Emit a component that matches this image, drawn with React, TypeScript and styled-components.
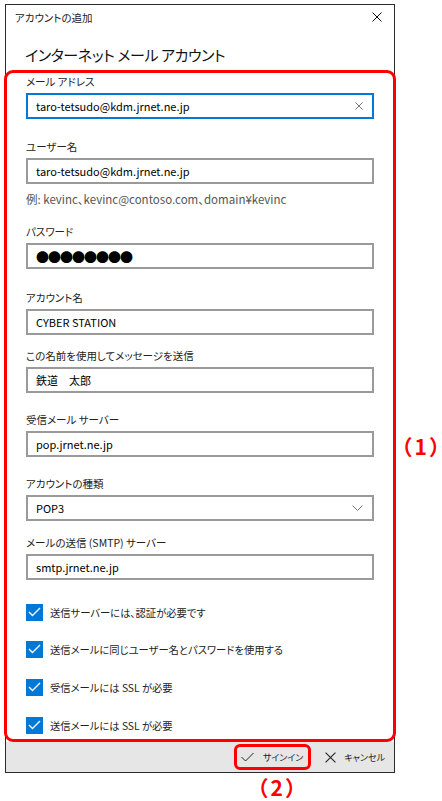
import React from 'react';
import styled, { createGlobalStyle } from 'styled-components';

const Colors = {
  RED: '#ff0000',
  BLUE: '#0078d7',
  BORDER: '#9a9a9a',
  FOOTER: '#e6e6e6',
  TEXT: '#1a1a1a',
  HINT: '#555555',
};

const GlobalStyle = createGlobalStyle`
  html, body {
    margin: 0;
    padding: 0;
    background: #ffffff;
  }
  body {
    font-family: "Noto Sans CJK JP", "Noto Sans", sans-serif;
    font-feature-settings: "palt";
    color: ${Colors.TEXT};
  }
`;

type FieldProps = {
  label: string;
  value: React.ReactNode;
  top: number;
  focused?: boolean;
  clear?: boolean;
  dropdown?: boolean;
};

const CloseGlyph: React.FC<{ size: number; color: string }> = ({ size, color }) => (
  <svg width={size} height={size} viewBox="0 0 10 10">
    <path d="M0.5 0.5 L9.5 9.5 M9.5 0.5 L0.5 9.5" stroke={color} strokeWidth="1" fill="none" />
  </svg>
);

const Field: React.FC<FieldProps> = ({ label, value, top, focused, clear, dropdown }) => (
  <FieldWrap $top={top}>
    <Label>{label}</Label>
    <TextBox $focused={focused}>
      <Value>{value}</Value>
      {clear && <CloseGlyph size={8} color="#555" />}
      {dropdown && (
        <svg width="11" height="6" viewBox="0 0 11 6">
          <path d="M0.5 0.5 L5.5 5.5 L10.5 0.5" stroke="#777" strokeWidth="1" fill="none" />
        </svg>
      )}
    </TextBox>
  </FieldWrap>
);

const Check: React.FC<{ label: string; top: number }> = ({ label, top }) => (
  <CheckRow $top={top}>
    <CheckBox>
      <svg width="13" height="10" viewBox="0 0 13 10">
        <path d="M1 5 L4.5 8.5 L12 1" stroke="#fff" strokeWidth="1.4" fill="none" />
      </svg>
    </CheckBox>
    <CheckText>{label}</CheckText>
  </CheckRow>
);

export default function App() {
  return (
    <>
      <GlobalStyle />
      <Page>
        <MainColumn>
          <Window>
            <TitleBar>
              <TitleText>アカウントの追加</TitleText>
              <CloseGlyph size={10} color="#111" />
            </TitleBar>
            <Heading>インターネット メール アカウント</Heading>
            <FormArea>
              <Field label="メール アドレス" value="taro-tetsudo@kdm.jrnet.ne.jp" top={0} focused clear />
              <Field label="ユーザー名" value="taro-tetsudo@kdm.jrnet.ne.jp" top={20} />
              <Hint>例: kevinc、kevinc@contoso.com、domain¥kevinc</Hint>
              <Field label="パスワード" value={<Dots>●●●●●●●●</Dots>} top={17} />
              <Field label="アカウント名" value="CYBER STATION" top={21} />
              <Field label="この名前を使用してメッセージを送信" value="鉄道　太郎" top={13} />
              <Field label="受信メール サーバー" value="pop.jrnet.ne.jp" top={19} />
              <Field label="アカウントの種類" value="POP3" top={19} dropdown />
              <Field label="メールの送信 (SMTP) サーバー" value="smtp.jrnet.ne.jp" top={14} />
              <Check label="送信サーバーには、認証が必要です" top={22} />
              <Check label="送信メールに同じユーザー名とパスワードを使用する" top={17} />
              <Check label="受信メールには SSL が必要" top={18} />
              <Check label="送信メールには SSL が必要" top={18} />
            </FormArea>
            <Footer>
              <SignInButton>
                <svg width="13" height="10" viewBox="0 0 13 10">
                  <path d="M0.5 5 L4.5 9 L12.5 1" stroke="#222" strokeWidth="1" fill="none" />
                </svg>
                <FooterText>サインイン</FooterText>
              </SignInButton>
              <CancelButton>
                <CloseGlyph size={11} color="#222" />
                <FooterText>キャンセル</FooterText>
              </CancelButton>
            </Footer>
          </Window>
          <Note $indent={252} $top={3}>（2）</Note>
        </MainColumn>
        <Side>
          <Note $indent={0} $top={0}>（1）</Note>
        </Side>
      </Page>
    </>
  );
}

/*
 * Styles
 */

const Page = styled.div`
  display: flex;
  flex-direction: row;
  padding: 4px 0 0 5px;
`;

const MainColumn = styled.div`
  display: flex;
  flex-direction: column;
`;

const Side = styled.div`
  padding-top: 431px;
  padding-left: 6px;
`;

const Window = styled.div`
  width: 390px;
  box-sizing: border-box;
  border: 1px solid #2b2b2b;
  display: flex;
  flex-direction: column;
`;

const TitleBar = styled.div`
  height: 24px;
  display: flex;
  align-items: center;
  justify-content: space-between;
  padding: 0 12px 0 9px;
`;

const TitleText = styled.span`
  font-size: 10.5px;
  color: #222;
`;

const Heading = styled.h1`
  margin: 14px 0 0 19px;
  font-size: 15px;
  letter-spacing: -0.4px;
  font-weight: 400;
  line-height: 24px;
  color: #111;
`;

const FormArea = styled.div`
  margin: 3px -2px 0 -2px;
  border: 3px solid ${Colors.RED};
  border-radius: 9px;
  padding: 1px 19px 4px;
  display: flex;
  flex-direction: column;
`;

const FieldWrap = styled.div<{ $top: number }>`
  margin-top: ${(p) => p.$top}px;
  display: flex;
  flex-direction: column;
  gap: 3px;
`;

const Label = styled.label`
  font-size: 10.5px;
  line-height: 16px;
  color: #222;
`;

const TextBox = styled.div<{ $focused?: boolean }>`
  height: 26px;
  box-sizing: border-box;
  border: 2px solid ${(p) => (p.$focused ? Colors.BLUE : Colors.BORDER)};
  display: flex;
  align-items: center;
  justify-content: space-between;
  padding: 0 9px 0 8px;
  background: #fff;
`;

const Value = styled.span`
  font-size: 11px;
  color: #000;
  white-space: pre;
`;

const Dots = styled.span`
  font-size: 13px;
  letter-spacing: -1px;
`;

const Hint = styled.div`
  margin-top: 7px;
  font-size: 11.5px;
  line-height: 16px;
  color: ${Colors.HINT};
`;

const CheckRow = styled.div<{ $top: number }>`
  margin-top: ${(p) => p.$top}px;
  height: 20px;
  display: flex;
  align-items: center;
  gap: 7px;
`;

const CheckBox = styled.span`
  width: 17px;
  height: 17px;
  background: ${Colors.BLUE};
  display: flex;
  align-items: center;
  justify-content: center;
`;

const CheckText = styled.span`
  font-size: 10.3px;
  color: #222;
`;

const Footer = styled.div`
  height: 30px;
  background: ${Colors.FOOTER};
  display: flex;
  align-items: center;
  justify-content: flex-end;
  gap: 14px;
  padding-right: 9px;
`;

const SignInButton = styled.div`
  height: 26px;
  box-sizing: border-box;
  border: 3px solid ${Colors.RED};
  border-radius: 6px;
  display: flex;
  align-items: center;
  gap: 9px;
  padding: 0 5px 0 4px;
`;

const CancelButton = styled.div`
  display: flex;
  align-items: center;
  gap: 8px;
`;

const FooterText = styled.span`
  font-size: 9px;
  color: #222;
`;

const Note = styled.div<{ $indent: number; $top: number }>`
  margin: ${(p) => p.$top}px 0 0 ${(p) => p.$indent}px;
  font-size: 21px;
  line-height: 22px;
  letter-spacing: 3px;
  font-weight: 700;
  color: ${Colors.RED};
  white-space: nowrap;
`;
